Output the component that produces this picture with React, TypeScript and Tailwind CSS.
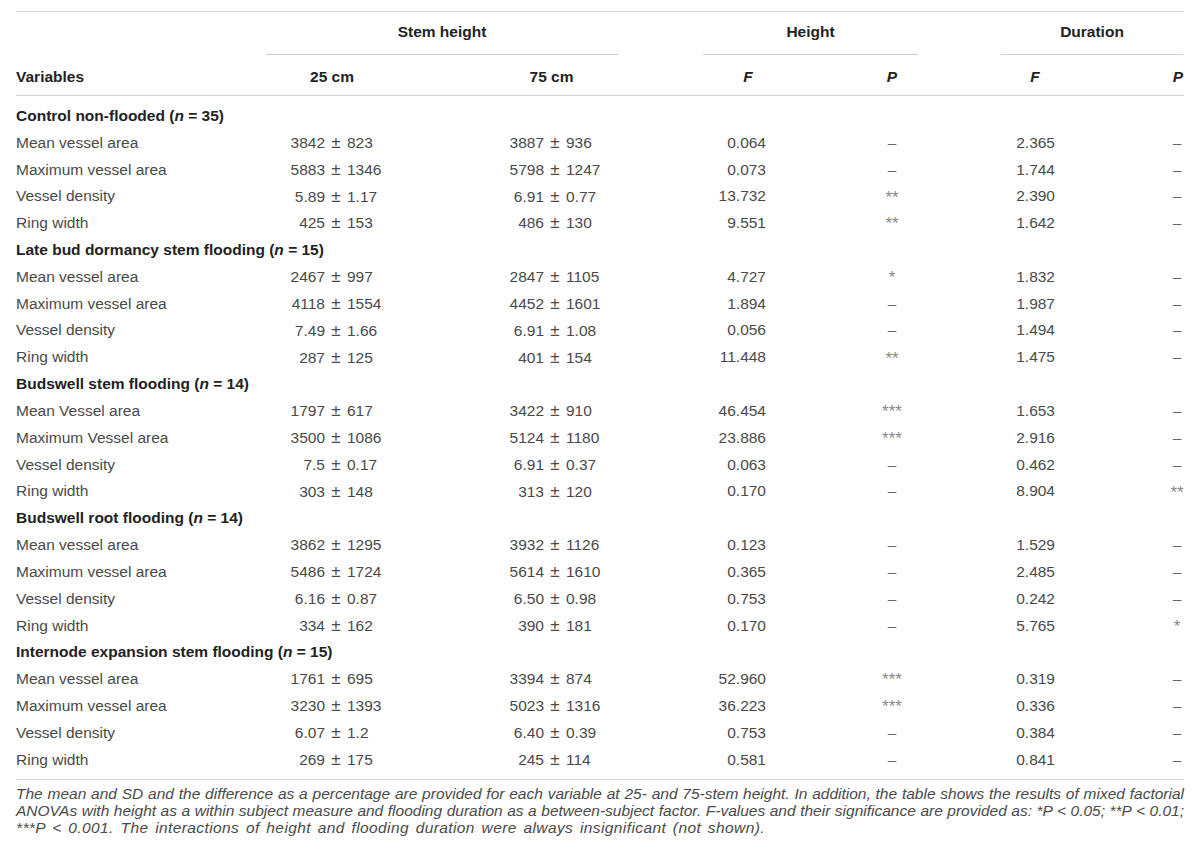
import React from "react";

type Row = [string, string, string, string, string, string, string];
type Group = { title: string; n: number; rows: Row[] };

const groups: Group[] = [
  {
    title: "Control non-flooded",
    n: 35,
    rows: [
      ["Mean vessel area", "3842 ± 823", "3887 ± 936", "0.064", "–", "2.365", "–"],
      ["Maximum vessel area", "5883 ± 1346", "5798 ± 1247", "0.073", "–", "1.744", "–"],
      ["Vessel density", "5.89 ± 1.17", "6.91 ± 0.77", "13.732", "**", "2.390", "–"],
      ["Ring width", "425 ± 153", "486 ± 130", "9.551", "**", "1.642", "–"],
    ],
  },
  {
    title: "Late bud dormancy stem flooding",
    n: 15,
    rows: [
      ["Mean vessel area", "2467 ± 997", "2847 ± 1105", "4.727", "*", "1.832", "–"],
      ["Maximum vessel area", "4118 ± 1554", "4452 ± 1601", "1.894", "–", "1.987", "–"],
      ["Vessel density", "7.49 ± 1.66", "6.91 ± 1.08", "0.056", "–", "1.494", "–"],
      ["Ring width", "287 ± 125", "401 ± 154", "11.448", "**", "1.475", "–"],
    ],
  },
  {
    title: "Budswell stem flooding",
    n: 14,
    rows: [
      ["Mean Vessel area", "1797 ± 617", "3422 ± 910", "46.454", "***", "1.653", "–"],
      ["Maximum Vessel area", "3500 ± 1086", "5124 ± 1180", "23.886", "***", "2.916", "–"],
      ["Vessel density", "7.5 ± 0.17", "6.91 ± 0.37", "0.063", "–", "0.462", "–"],
      ["Ring width", "303 ± 148", "313 ± 120", "0.170", "–", "8.904", "**"],
    ],
  },
  {
    title: "Budswell root flooding",
    n: 14,
    rows: [
      ["Mean vessel area", "3862 ± 1295", "3932 ± 1126", "0.123", "–", "1.529", "–"],
      ["Maximum vessel area", "5486 ± 1724", "5614 ± 1610", "0.365", "–", "2.485", "–"],
      ["Vessel density", "6.16 ± 0.87", "6.50 ± 0.98", "0.753", "–", "0.242", "–"],
      ["Ring width", "334 ± 162", "390 ± 181", "0.170", "–", "5.765", "*"],
    ],
  },
  {
    title: "Internode expansion stem flooding",
    n: 15,
    rows: [
      ["Mean vessel area", "1761 ± 695", "3394 ± 874", "52.960", "***", "0.319", "–"],
      ["Maximum vessel area", "3230 ± 1393", "5023 ± 1316", "36.223", "***", "0.336", "–"],
      ["Vessel density", "6.07 ± 1.2", "6.40 ± 0.39", "0.753", "–", "0.384", "–"],
      ["Ring width", "269 ± 175", "245 ± 114", "0.581", "–", "0.841", "–"],
    ],
  },
];

const GRID =
  "grid grid-cols-[250px_132px_87px_133px_85px_90px_73px_52px_83px_68px_102px_12px]";

function Sig({ v }: { v: string }) {
  if (v === "–") return <span className="text-[#666]">–</span>;
  return <span className="text-[#8a8a8a] text-[17px] leading-none relative top-[1px]">{v}</span>;
}

function PM({ v }: { v: string }) {
  const [a, b] = v.split(" ± ");
  return (
    <div className="flex items-baseline whitespace-nowrap">
      <span className="w-[59px] text-right">{a}</span>
      <span className="w-[22px] text-center text-[17px] leading-none">±</span>
      <span>{b}</span>
    </div>
  );
}

function DataRow({ r }: { r: Row }) {
  return (
    <div className={`${GRID} h-[26.83px] items-center`}>
      <div className="whitespace-nowrap">{r[0]}</div>
      <PM v={r[1]} />
      <div />
      <PM v={r[2]} />
      <div />
      <div className="text-right pr-[27px]">{r[3]}</div>
      <div />
      <div className="flex justify-center">
        <Sig v={r[4]} />
      </div>
      <div />
      <div className="text-right pr-[14px]">{r[5]}</div>
      <div />
      <div className="flex justify-center">
        <Sig v={r[6]} />
      </div>
    </div>
  );
}

export default function App() {
  return (
    <div
      className="w-[1200px] h-[866px] bg-white pt-[11px] px-[16px] text-[#4a4a4a] text-[15.5px] leading-none"
      style={{ fontFamily: '"Liberation Sans", Arial, Helvetica, sans-serif' }}
    >
      <div className="border-t border-[#d4d4d4]">
        {/* header row 1 */}
        <div className={`${GRID} h-[43px] font-bold text-[#222]`}>
          <div />
          <div className="col-span-3 border-b border-[#cfcfcf] flex items-center justify-center pb-[2px]">
            Stem height
          </div>
          <div />
          <div className="col-span-3 border-b border-[#cfcfcf] flex items-center justify-center pb-[2px]">
            Height
          </div>
          <div />
          <div className="col-span-3 border-b border-[#cfcfcf] flex items-center justify-center pb-[2px]">
            Duration
          </div>
        </div>
        {/* header row 2 */}
        <div className={`${GRID} h-[41px] items-center font-bold text-[#222] pt-[3px] border-b border-[#d4d4d4]`}>
          <div>Variables</div>
          <div className="text-center">25 cm</div>
          <div />
          <div className="text-center">75 cm</div>
          <div />
          <div className="text-center italic">F</div>
          <div />
          <div className="text-right pr-[21px] italic">P</div>
          <div />
          <div className="text-center italic">F</div>
          <div />
          <div className="text-right italic">P</div>
        </div>
        {/* body */}
        <div className="pt-[6.2px] pb-[6.4px] border-b border-[#d4d4d4]">
          {groups.map((g) => (
            <div key={g.title}>
              <div className="h-[26.83px] flex items-center font-bold text-[#222] whitespace-nowrap">
                {g.title}&nbsp;(<span className="italic">n</span>&nbsp;=&nbsp;{g.n})
              </div>
              {g.rows.map((r, i) => (
                <DataRow key={i} r={r} />
              ))}
            </div>
          ))}
        </div>
        {/* footnote */}
        <div className="pt-[5px] italic text-[15.5px] leading-[17px] text-[#4a4a4a]">
          <p className="whitespace-nowrap text-justify [text-align-last:justify]">
            The mean and SD and the difference as a percentage are provided for each variable at 25- and 75-stem height. In addition, the table shows the results of mixed factorial
          </p>
          <p className="whitespace-nowrap text-justify [text-align-last:justify]">
            ANOVAs with height as a within subject measure and flooding duration as a between-subject factor. F-values and their significance are provided as: *P &lt; 0.05; **P &lt; 0.01;
          </p>
          <p className="whitespace-nowrap tracking-[0.4px] [word-spacing:2px]">
            ***P &lt; 0.001. The interactions of height and flooding duration were always insignificant (not shown).
          </p>
        </div>
      </div>
    </div>
  );
}
